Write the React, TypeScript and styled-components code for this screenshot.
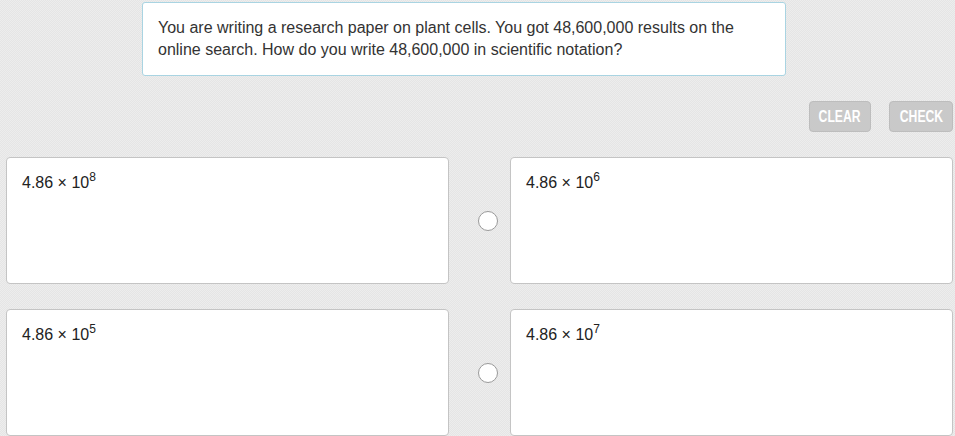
import { FunctionComponent } from 'react'
import styled, { createGlobalStyle } from 'styled-components'

const GlobalStyle = createGlobalStyle`
    html, body {
        margin: 0;
        padding: 0;
        overflow: hidden;
    }
    body {
        font-family: "Liberation Sans", Arial, sans-serif;
        color: #333;
        background-color: #e9e9e9;
        background-image: repeating-conic-gradient(#e5e5e5 0% 25%, #ededed 0% 50%);
        background-size: 2px 2px;
    }
`

const Page = styled.div`
    width: 955px;
    height: 436px;
    padding-top: 2px;
    box-sizing: border-box;
`

const Question = styled.div`
    margin-left: 142px;
    width: 644px;
    height: 74px;
    box-sizing: border-box;
    padding: 14px 15px 0 15px;
    background: #fff;
    border: 1px solid #a9d4e2;
    border-radius: 3px;
    font-size: 16px;
    line-height: 22px;
    color: #333;
`

const Toolbar = styled.div`
    display: flex;
    justify-content: flex-end;
    gap: 18px;
    margin-top: 25px;
    padding-right: 2px;
`

const Button = styled.button<{ $width: number }>`
    width: ${({ $width }) => $width}px;
    height: 31px;
    padding: 0;
    background: #c9c9c9;
    border: 1px solid #bdbdbd;
    border-radius: 4px;
    color: #fff;
    font-family: "Liberation Sans", Arial, sans-serif;
    font-weight: bold;
    font-size: 16px;
    cursor: default;
`

const ButtonLabel = styled.span`
    display: inline-block;
    transform: scaleX(0.76);
`

const Options = styled.div`
    display: grid;
    grid-template-columns: 475px 475px;
    column-gap: 29px;
    row-gap: 25px;
    margin-top: 25px;
    margin-left: -26px;
`

const Option = styled.div`
    display: flex;
    align-items: center;
    gap: 12px;
`

const Radio = styled.span`
    flex: none;
    width: 20px;
    height: 20px;
    box-sizing: border-box;
    border-radius: 50%;
    background: #fff;
    border: 1px solid #9a9a9a;
`

const Card = styled.div`
    flex: 1;
    height: 127px;
    box-sizing: border-box;
    padding: 14px 15px;
    background: #fff;
    border: 1px solid #c4c4c4;
    border-radius: 4px;
    font-size: 16px;
    line-height: 22px;
    color: #222;
`

const Sup = styled.sup`
    font-size: 12px;
    line-height: 0;
    vertical-align: 7px;
`

const answers = ['8', '6', '5', '7']

const App: FunctionComponent = () => {
    return (
        <Page>
            <GlobalStyle />
            <Question>
                You are writing a research paper on plant cells. You got 48,600,000 results on the online search. How do you write 48,600,000 in scientific notation?
            </Question>
            <Toolbar>
                <Button $width={62}><ButtonLabel>CLEAR</ButtonLabel></Button>
                <Button $width={64}><ButtonLabel>CHECK</ButtonLabel></Button>
            </Toolbar>
            <Options>
                {answers.map((exp) => (
                    <Option key={exp}>
                        <Radio />
                        <Card>
                            4.86 × 10<Sup>{exp}</Sup>
                        </Card>
                    </Option>
                ))}
            </Options>
        </Page>
    )
}

export default App
